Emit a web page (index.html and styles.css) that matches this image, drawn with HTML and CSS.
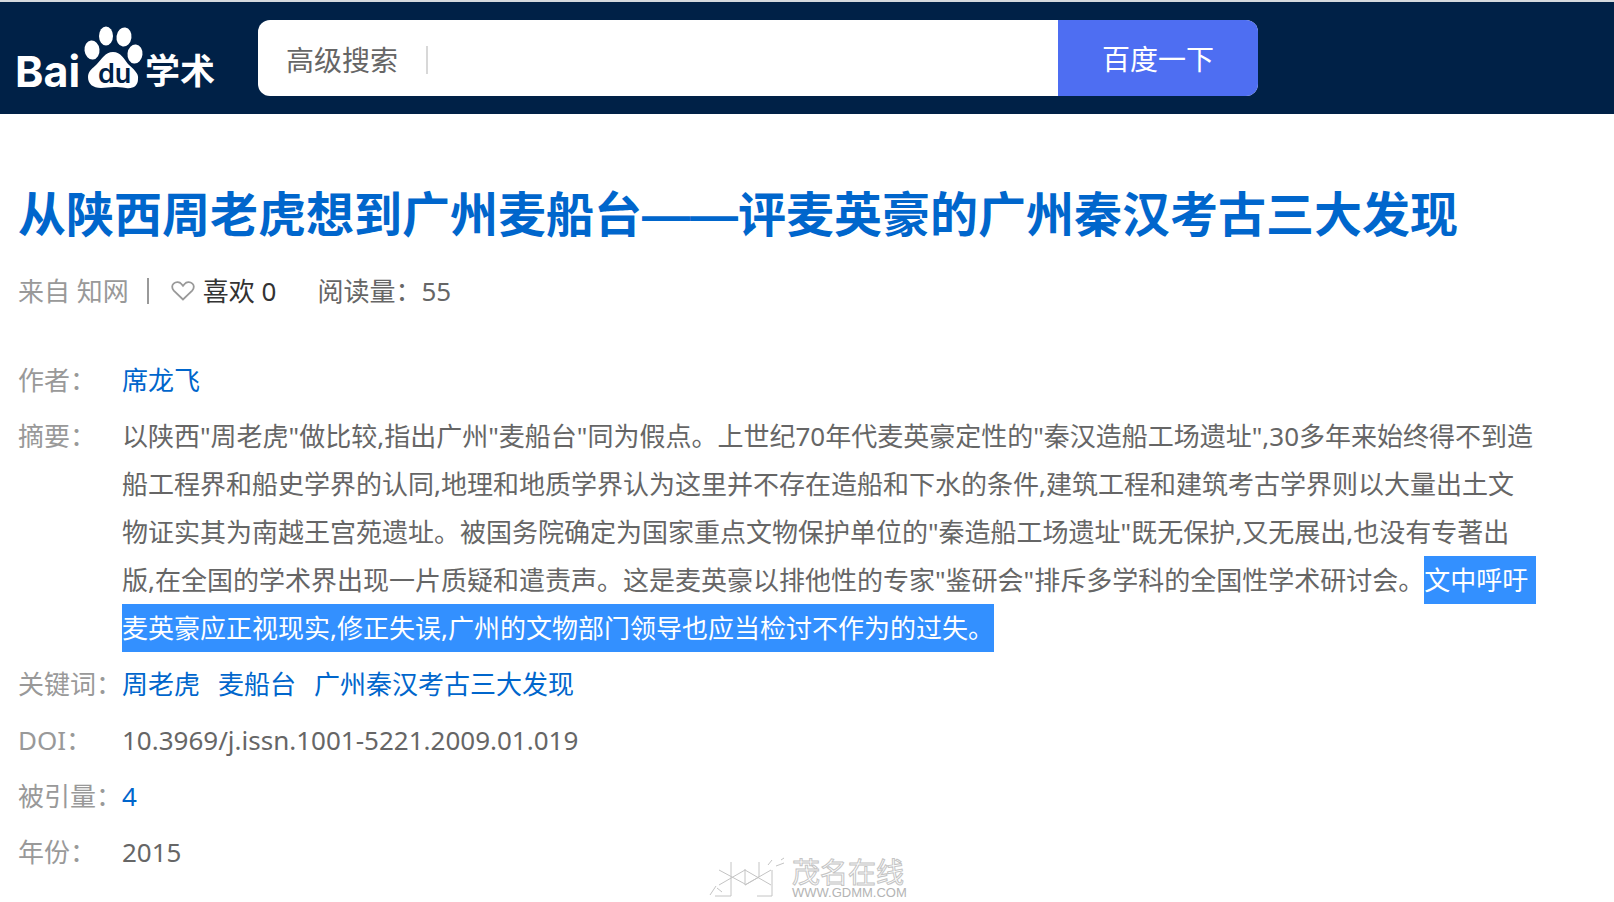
FILE: index.html
```
<!DOCTYPE html>
<html lang="zh-CN">
<head>
    <meta charset="UTF-8">
    <meta name="viewport" content="width=device-width, initial-scale=1.0">
    <title>从陕西周老虎想到广州麦船台——评麦英豪的广州秦汉考古三大发现 - 百度学术</title>
    <link rel="stylesheet" href="styles.css">
</head>
<body>

<!-- 顶部搜索栏 -->
<header class="header">
    <a class="logo" href="#" aria-label="百度学术">
        <svg width="198" height="64" viewBox="0 0 198 64">
            <g fill="#fff">
                <ellipse cx="74" cy="24" rx="7.500" ry="9.500" transform="rotate(-6 74 24)"/>
                <ellipse cx="88" cy="10" rx="7" ry="9.500"/>
                <ellipse cx="106" cy="11" rx="7.500" ry="9.500" transform="rotate(8 106 11)"/>
                <ellipse cx="117" cy="28" rx="7.500" ry="9.500" transform="rotate(6 117 28)"/>
                <path d="M95 26c8 0 11 7 15 12 5 5 11 9 10 15 0 7-5 10-12 9-5-1-8-1-12-1-5 0-8 1-13 1-8 0-13-4-13-11 0-6 5-9 9-13 5-5 8-12 16-12z"/>
                <text class="logo-bai" x="-3" y="61">Bai</text>
                <text class="logo-cn" x="127" y="58">学术</text>
            </g>
            <text class="logo-du" x="80" y="57">du</text>
        </svg>
    </a>
    <form class="search">
        <a class="search-advanced" href="#">高级搜索</a>
        <input class="search-input" type="text" name="wd" aria-label="搜索">
        <button class="search-btn" type="submit">百度一下</button>
    </form>
</header>

<main class="main">
    <h1 class="title"><a href="#">从陕西周老虎想到广州麦船台——评麦英豪的广州秦汉考古三大发现</a></h1>

    <div class="meta">
        <span class="meta-source">来自 知网</span>
        <button class="like" type="button">
            <svg width="24" height="20" viewBox="0 0 24 20">
                <path d="M12 18.5 2.8 9.6C.6 7.2.8 4.2 2.6 2.6 5 .5 8.6.8 10.4 3L12 4.9 13.6 3c1.800-2.200 5.400-2.500 7.800-.4 1.800 1.600 2 4.600-.2 7z" fill="none" stroke="#999" stroke-width="1.800"/>
            </svg>
            喜欢 0
        </button>
        <span class="meta-read">阅读量：55</span>
    </div>

    <!-- 文献信息 -->
    <dl class="info">
        <div class="row">
            <dt>作者：</dt>
            <dd><a href="#">席龙飞</a></dd>
        </div>
        <div class="row">
            <dt>摘要：</dt>
            <dd>以陕西"周老虎"做比较,指出广州"麦船台"同为假点。上世纪70年代麦英豪定性的"秦汉造船工场遗址",30多年来始终得不到造<br>船工程界和船史学界的认同,地理和地质学界认为这里并不存在造船和下水的条件,建筑工程和建筑考古学界则以大量出土文<br>物证实其为南越王宫苑遗址。被国务院确定为国家重点文物保护单位的"秦造船工场遗址"既无保护,又无展出,也没有专著出<br>版,在全国的学术界出现一片质疑和遣责声。这是麦英豪以排他性的专家"鉴研会"排斥多学科的全国性学术研讨会。<mark class="line-end">文中呼吁</mark><br><mark>麦英豪应正视现实,修正失误,广州的文物部门领导也应当检讨不作为的过失。</mark></dd>
        </div>
        <div class="row">
            <dt>关键词：</dt>
            <dd class="keywords"><a href="#">周老虎</a><a href="#">麦船台</a><a href="#">广州秦汉考古三大发现</a></dd>
        </div>
        <div class="row">
            <dt>DOI：</dt>
            <dd>10.3969/j.issn.1001-5221.2009.01.019</dd>
        </div>
        <div class="row">
            <dt>被引量：</dt>
            <dd><a href="#">4</a></dd>
        </div>
        <div class="row">
            <dt>年份：</dt>
            <dd>2015</dd>
        </div>
    </dl>
</main>

<!-- 水印 -->
<svg class="watermark" width="206" height="60" viewBox="0 -12 206 60">
    <path class="watermark-mark" d="M3 41l6-9M10 34l5 4M8 42h16M24 42V8M12 16l26 14M12 31l26-15M38 15v16l14-8M38 16l26 15M38 31l26-15M52 8v15M50 42h15V16M61 11l4-5M69 12l8-3M74 6l3-2"/>
    <text class="watermark-cn" x="85" y="29">茂名在线</text>
    <text class="watermark-url" x="85" y="43">WWW.GDMM.COM</text>
</svg>

</body>
</html>
```
FILE: styles.css
```
* {
    box-sizing: border-box;
}

body {
    margin: 0;
    background-color: #fff;
    color: #666;
    font-family: "Noto Sans", "Noto Sans CJK SC", sans-serif;
    font-size: 26px;
    line-height: 48px;
}

a {
    color: #0066cc;
    text-decoration: none;
}

/* 顶部 */
.header {
    display: flex;
    align-items: center;
    gap: 42px;
    padding: 18px;
    border-top: 2px solid #d5dade;
    background-color: #002147;
}

.logo {
    display: flex;
}

.logo svg {
    overflow: visible;
}

.logo-bai {
    font: bold 43px Inter, sans-serif;
}

.logo-du {
    font: 600 27px Inter, sans-serif;
    fill: #002147;
}

.logo-cn {
    font: bold 35px "Noto Sans CJK SC", sans-serif;
}

/* 搜索框 */
.search {
    display: flex;
    align-items: center;
    flex: 0 1 1000px;
    height: 76px;
    border-radius: 12px;
    background-color: #fff;
    overflow: hidden;
    font-size: 28px;
}

.search-advanced {
    margin: 4px 0 0 28px;
    padding-right: 28px;
    border-right: 2px solid #d8d8d8;
    color: #666;
    line-height: 28px;
}

.search-input {
    flex: 1;
    min-width: 0;
    height: 76px;
    padding: 0 20px;
    border: none;
    outline: none;
    font: inherit;
}

.search-btn {
    width: 200px;
    height: 76px;
    padding: 2px 0 0;
    border: none;
    background-color: #4e6ef2;
    color: #fff;
    font: inherit;
    cursor: pointer;
}

/* 标题 */
.main {
    padding: 67px 76px 0 18px;
}

.title {
    margin: 0;
    font-family: "Liberation Sans", "Noto Sans CJK SC", sans-serif;
    font-size: 48px;
    font-weight: bold;
    line-height: 70px;
}

.meta {
    display: flex;
    align-items: center;
    margin: 16px 0 41px;
}

.meta-source {
    padding-right: 18px;
    border-right: 2px solid #999;
    color: #999;
    line-height: 26px;
}

.like {
    display: flex;
    align-items: center;
    gap: 8px;
    margin: 0 41px 0 22px;
    padding: 0;
    border: none;
    background: none;
    color: #333;
    font: inherit;
    cursor: pointer;
}

/* 文献信息 */
.info {
    display: flex;
    flex-direction: column;
    gap: 8px;
    margin: 0;
}

.row {
    display: flex;
}

.row dt {
    flex: 0 0 104px;
    color: #999;
    white-space: nowrap;
}

.row dd {
    margin: 0;
    white-space: nowrap;
}

.keywords {
    display: flex;
    gap: 18px;
}

mark {
    padding: 6px 0;
    background-color: #3390ff;
    color: #fff;
}

mark.line-end {
    padding-right: 8px;
}

/* 水印 */
.watermark {
    position: absolute;
    left: 50%;
    bottom: 0;
    margin-left: -100px;
}

.watermark-mark {
    fill: none;
    stroke: #c4c4c4;
    stroke-width: 1;
}

.watermark-cn {
    font: 28px "Noto Sans CJK SC", sans-serif;
    fill: #fff;
    stroke: #c4c4c4;
    stroke-width: 1;
}

.watermark-url {
    font: 13px "Liberation Sans", sans-serif;
    fill: #b4b4b4;
}
```
